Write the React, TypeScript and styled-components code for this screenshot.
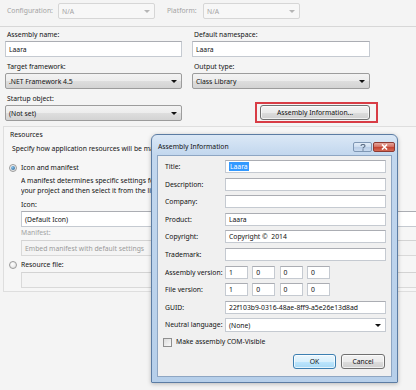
import React from "react";
import styled, { createGlobalStyle } from "styled-components";

const GlobalStyle = createGlobalStyle`
  body {
    margin: 0;
    background: #f4f4f4;
    font-family: "Noto Sans", "Liberation Sans", sans-serif;
    font-size: 6.8px;
    color: #111;
  }
`;

const S = {
  Page: styled.div`
    position: relative;
    width: 416px;
    height: 390px;
    overflow: hidden;
    background: #f4f4f4;
  `,
  TopBar: styled.div`
    display: flex;
    align-items: flex-start;
    height: 27px;
    box-sizing: border-box;
    padding: 3px 0 0 7px;
    border-bottom: 1px solid #d7d7d7;
  `,
  BarLabel: styled.div<{ $width: number; $gap?: number }>`
    width: ${(p) => p.$width}px;
    margin-left: ${(p) => p.$gap || 0}px;
    line-height: 16px;
    color: #a3a3a3;
  `,
  Form: styled.div`
    display: grid;
    grid-template-columns: 177px 178px;
    grid-auto-rows: 29px;
    column-gap: 10px;
    row-gap: 3px;
    padding: 1px 0 0 5px;
  `,
  Field: styled.div`
    display: flex;
    flex-direction: column;
  `,
  FieldLabel: styled.div`
    line-height: 13px;
    padding-left: 2px;
  `,
  TextBox: styled.div<{ $dim?: boolean; $h?: number }>`
    box-sizing: border-box;
    height: ${(p) => p.$h || 16}px;
    padding: 0 3px;
    display: flex;
    align-items: center;
    white-space: pre;
    overflow: hidden;
    background: ${(p) => (p.$dim ? "#f4f4f4" : "#ffffff")};
    color: ${(p) => (p.$dim ? "#9a9a9a" : "#111")};
    border: 1px solid ${(p) => (p.$dim ? "#d9d9d9" : "#c5cad1")};
    border-top-color: ${(p) => (p.$dim ? "#d3d3d3" : "#abadb3")};
  `,
  Select: styled.div<{ $width?: number; $kind?: "dim" | "button" | "white"; $h?: number }>`
    box-sizing: border-box;
    width: ${(p) => (p.$width ? `${p.$width}px` : "auto")};
    height: ${(p) => p.$h || 16}px;
    display: flex;
    align-items: center;
    padding: 0 4px 0 3px;
    border: 1px solid
      ${(p) => (p.$kind === "dim" ? "#d6d6d6" : p.$kind === "white" ? "#c5cad1" : "#9c9c9c")};
    border-radius: ${(p) => (p.$kind === "white" ? 0 : 2)}px;
    background: ${(p) =>
      p.$kind === "dim"
        ? "#f7f7f7"
        : p.$kind === "white"
        ? "#ffffff"
        : "linear-gradient(#f3f3f3, #ececec 50%, #dedede 51%, #d3d3d3)"};
    color: ${(p) => (p.$kind === "dim" ? "#a3a3a3" : "#111")};
  `,
  SelectText: styled.span`
    flex: 1;
    white-space: nowrap;
  `,
  Arrow: styled.span<{ $dim?: boolean }>`
    width: 0;
    height: 0;
    border-left: 3px solid transparent;
    border-right: 3px solid transparent;
    border-top: 3px solid ${(p) => (p.$dim ? "#b5b5b5" : "#111")};
  `,
  InfoCell: styled.div`
    display: flex;
    align-items: flex-end;
    padding: 0 0 0 63px;
  `,
  Highlight: styled.div`
    padding: 1px 6px 1px 3px;
    border: 2px solid #d83c45;
    margin-bottom: -2px;
  `,
  Button: styled.div<{ $width: number; $default?: boolean }>`
    box-sizing: border-box;
    width: ${(p) => p.$width}px;
    height: 15px;
    display: flex;
    align-items: center;
    justify-content: center;
    border: 1px solid ${(p) => (p.$default ? "#3c7fb1" : "#707070")};
    border-radius: 3px;
    background: ${(p) =>
      p.$default
        ? "linear-gradient(#eaf6fd, #d9f0fc 50%, #bee6fd 51%, #a7d9f5)"
        : "linear-gradient(#f2f2f2, #ebebeb 50%, #dddddd 51%, #cfcfcf)"};
    box-shadow: inset 0 0 0 1px rgba(255, 255, 255, 0.7);
    color: #111;
  `,
  Group: styled.section`
    margin: 5px -4px 0 3px;
    padding: 3px 0 3px 5px;
    border: 1px solid #dedede;
    background: #f6f6f6;
  `,
  GroupTitle: styled.div`
    padding-left: 1px;
    line-height: 10px;
  `,
  Hint: styled.div`
    width: 139px;
    margin-top: 3px;
    padding-left: 3px;
    line-height: 11px;
    white-space: nowrap;
    overflow: hidden;
  `,
  RadioRow: styled.div<{ $top: number }>`
    display: flex;
    align-items: center;
    gap: 4px;
    margin-top: ${(p) => p.$top}px;
    line-height: 10px;
    white-space: nowrap;
  `,
  Radio: styled.span<{ $checked?: boolean }>`
    box-sizing: border-box;
    width: 8px;
    height: 8px;
    border-radius: 50%;
    border: 1px solid #9a9a9a;
    display: flex;
    align-items: center;
    justify-content: center;
    background: radial-gradient(circle at 40% 35%, #ffffff, #dcdcdc);
    &::after {
      content: "";
      display: ${(p) => (p.$checked ? "block" : "none")};
      width: 4px;
      height: 4px;
      border-radius: 50%;
      background: radial-gradient(circle at 35% 35%, #8cc4ec, #1d5a8c);
    }
  `,
  Indent: styled.div`
    padding: 0 0 0 12px;
    display: flex;
    flex-direction: column;
  `,
  Line: styled.div<{ $top?: number; $dim?: boolean }>`
    width: 130px;
    margin-top: ${(p) => p.$top || 0}px;
    line-height: 10px;
    white-space: nowrap;
    overflow: hidden;
    color: ${(p) => (p.$dim ? "#a3a3a3" : "#111")};
  `,
  Dialog: styled.div`
    position: absolute;
    left: 151px;
    top: 134px;
    width: 247px;
    height: 249px;
    box-sizing: border-box;
    display: flex;
    flex-direction: column;
    padding: 0 5px 5px;
    border: 1px solid #5b7ca3;
    border-radius: 6px 6px 1px 1px;
    background: linear-gradient(#dbe8f6, #c2d7ee 20px, #b6cfea);
    box-shadow: 0 1px 4px rgba(0, 0, 0, 0.25);
  `,
  TitleBar: styled.div`
    display: flex;
    align-items: flex-start;
    height: 20px;
  `,
  Title: styled.div`
    flex: 1;
    padding: 6px 0 0 1px;
    line-height: 11px;
  `,
  CapButton: styled.div<{ $close?: boolean; $width: number }>`
    box-sizing: border-box;
    width: ${(p) => p.$width}px;
    height: 10px;
    margin-top: 7px;
    margin-right: ${(p) => (p.$close ? -3 : 1)}px;
    display: flex;
    align-items: center;
    justify-content: center;
    border: 1px solid ${(p) => (p.$close ? "#8d3a33" : "#7f97b4")};
    border-radius: 2px;
    background: ${(p) =>
      p.$close
        ? "linear-gradient(#e6a69c, #d26a5c 50%, #c2402f 51%, #d56a56)"
        : "linear-gradient(#e3ecf7, #cdddf0 50%, #b9cde6 51%, #c9daef)"};
  `,
  Client: styled.div`
    flex: 1;
    display: flex;
    flex-direction: column;
    padding: 4px 5px 0 7px;
    border: 1px solid #8ea6c3;
    background: #f0f0f0;
  `,
  InfoGrid: styled.div`
    display: grid;
    grid-template-columns: 60px 1fr;
    grid-auto-rows: 13px;
    row-gap: 4.6px;
  `,
  InfoLabel: styled.div`
    display: flex;
    align-items: center;
    white-space: nowrap;
  `,
  Selected: styled.span`
    background: #3399ff;
    color: #ffffff;
    padding: 0 1px;
    line-height: 9px;
  `,
  Versions: styled.div`
    display: flex;
    gap: 4.3px;
  `,
  VersionBox: styled.div`
    box-sizing: border-box;
    width: 23px;
    height: 13px;
    padding-left: 3px;
    display: flex;
    align-items: center;
    background: #ffffff;
    border: 1px solid #c5cad1;
    border-top-color: #abadb3;
  `,
  CheckRow: styled.div`
    display: flex;
    align-items: center;
    gap: 4px;
    margin: 6px 0 0 -2px;
    line-height: 10px;
  `,
  CheckBox: styled.span`
    box-sizing: border-box;
    width: 9px;
    height: 9px;
    border: 1px solid #8f8f8f;
    background: linear-gradient(135deg, #dcdcdc, #fafafa);
  `,
  Actions: styled.div`
    display: flex;
    justify-content: flex-end;
    gap: 5px;
    margin-top: 7px;
    padding-right: 1px;
  `,
};

const Dropdown = ({
  text,
  width,
  kind = "button",
  h,
}: {
  text: string;
  width?: number;
  kind?: "dim" | "button" | "white";
  h?: number;
}) => (
  <S.Select $width={width} $kind={kind} $h={h}>
    <S.SelectText>{text}</S.SelectText>
    <S.Arrow $dim={kind === "dim"} />
  </S.Select>
);

const infoRows: [string, string][] = [
  ["Description:", ""],
  ["Company:", ""],
  ["Product:", "Laara"],
  ["Copyright:", "Copyright ©  2014"],
  ["Trademark:", ""],
];

const version = ["1", "0", "0", "0"];

const App = () => {
  return (
    <S.Page>
      <GlobalStyle />
      <S.TopBar>
        <S.BarLabel $width={51}>Configuration:</S.BarLabel>
        <Dropdown text="N/A" width={97} kind="dim" />
        <S.BarLabel $width={36} $gap={12}>
          Platform:
        </S.BarLabel>
        <Dropdown text="N/A" width={97} kind="dim" />
      </S.TopBar>

      <S.Form>
        <S.Field>
          <S.FieldLabel>Assembly name:</S.FieldLabel>
          <S.TextBox>Laara</S.TextBox>
        </S.Field>
        <S.Field>
          <S.FieldLabel>Default namespace:</S.FieldLabel>
          <S.TextBox>Laara</S.TextBox>
        </S.Field>
        <S.Field>
          <S.FieldLabel>Target framework:</S.FieldLabel>
          <Dropdown text=".NET Framework 4.5" />
        </S.Field>
        <S.Field>
          <S.FieldLabel>Output type:</S.FieldLabel>
          <Dropdown text="Class Library" />
        </S.Field>
        <S.Field>
          <S.FieldLabel>Startup object:</S.FieldLabel>
          <Dropdown text="(Not set)" />
        </S.Field>
        <S.InfoCell>
          <S.Highlight>
            <S.Button $width={110}>Assembly Information...</S.Button>
          </S.Highlight>
        </S.InfoCell>
      </S.Form>

      <S.Group>
        <S.GroupTitle>Resources</S.GroupTitle>
        <S.Hint>Specify how application resources will be managed:</S.Hint>
        <S.RadioRow $top={9}>
          <S.Radio $checked />
          Icon and manifest
        </S.RadioRow>
        <S.Indent>
          <S.Line $top={3}>A manifest determines specific settings for an application.</S.Line>
          <S.Line>your project and then select it from the list below.</S.Line>
          <S.Line $top={4}>Icon:</S.Line>
          <S.TextBox style={{ marginTop: 1 }}>(Default Icon)</S.TextBox>
          <S.Line $top={1} $dim>
            Manifest:
          </S.Line>
          <S.TextBox $dim style={{ marginTop: 2 }}>
            Embed manifest with default settings
          </S.TextBox>
        </S.Indent>
        <S.RadioRow $top={4}>
          <S.Radio />
          Resource file:
        </S.RadioRow>
        <S.Indent>
          <S.TextBox $dim style={{ marginTop: 2 }} />
        </S.Indent>
      </S.Group>

      <S.Dialog>
        <S.TitleBar>
          <S.Title>Assembly Information</S.Title>
          <S.CapButton $width={19}>
            <svg width="6" height="7" viewBox="0 0 6 7">
              <path
                d="M1 2 C1 0.6 2 0.4 3 0.4 C4.2 0.4 5 1 5 2 C5 3.1 3 3.2 3 4.4"
                fill="none"
                stroke="#5d6f86"
                strokeWidth="1.1"
              />
              <rect x="2.4" y="5.4" width="1.2" height="1.2" fill="#5d6f86" />
            </svg>
          </S.CapButton>
          <S.CapButton $width={22} $close>
            <svg width="7" height="6" viewBox="0 0 7 6">
              <path d="M1 0.5 L6 5.5 M6 0.5 L1 5.5" stroke="#ffffff" strokeWidth="1.6" />
            </svg>
          </S.CapButton>
        </S.TitleBar>
        <S.Client>
          <S.InfoGrid>
            <S.InfoLabel>Title:</S.InfoLabel>
            <S.TextBox $h={13}>
              <S.Selected>Laara</S.Selected>
            </S.TextBox>
            {infoRows.map(([label, value]) => (
              <React.Fragment key={label}>
                <S.InfoLabel>{label}</S.InfoLabel>
                <S.TextBox $h={13}>{value}</S.TextBox>
              </React.Fragment>
            ))}
            <S.InfoLabel>Assembly version:</S.InfoLabel>
            <S.Versions>
              {version.map((v, i) => (
                <S.VersionBox key={i}>{v}</S.VersionBox>
              ))}
            </S.Versions>
            <S.InfoLabel>File version:</S.InfoLabel>
            <S.Versions>
              {version.map((v, i) => (
                <S.VersionBox key={i}>{v}</S.VersionBox>
              ))}
            </S.Versions>
            <S.InfoLabel>GUID:</S.InfoLabel>
            <S.TextBox $h={13}>22f103b9-0316-48ae-8ff9-a5e26e13d8ad</S.TextBox>
            <S.InfoLabel>Neutral language:</S.InfoLabel>
            <Dropdown text="(None)" kind="white" h={14} />
          </S.InfoGrid>
          <S.CheckRow>
            <S.CheckBox />
            Make assembly COM-Visible
          </S.CheckRow>
          <S.Actions>
            <S.Button $width={43} $default>
              OK
            </S.Button>
            <S.Button $width={44}>Cancel</S.Button>
          </S.Actions>
        </S.Client>
      </S.Dialog>
    </S.Page>
  );
};

export default App;
